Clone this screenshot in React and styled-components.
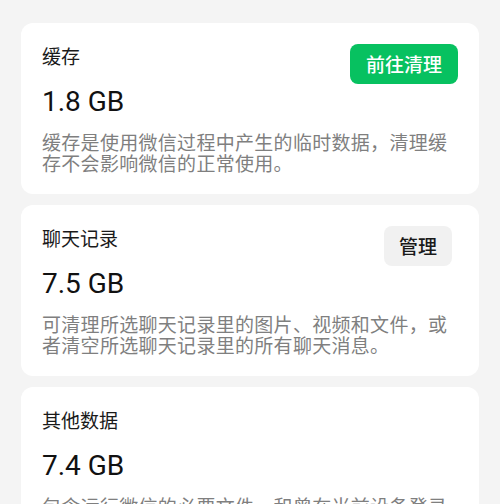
import styled, { createGlobalStyle } from "styled-components";

const GlobalStyle = createGlobalStyle`
  html, body {
    margin: 0;
    padding: 0;
    background: #f4f4f4;
  }
  body {
    font-family: "Noto Sans CJK SC", "Noto Sans", sans-serif;
    -webkit-font-smoothing: antialiased;
  }
`;

const storage = [
  {
    title: "缓存",
    size: "1.8 GB",
    desc: "缓存是使用微信过程中产生的临时数据，清理缓存不会影响微信的正常使用。",
    action: { label: "前往清理", primary: true },
  },
  {
    title: "聊天记录",
    size: "7.5 GB",
    desc: "可清理所选聊天记录里的图片、视频和文件，或者清空所选聊天记录里的所有聊天消息。",
    action: { label: "管理", primary: false },
  },
  {
    title: "其他数据",
    size: "7.4 GB",
    desc: "包含运行微信的必要文件，和曾在当前设备登录过的账号数据。",
  },
];

const App = () => {
  return (
    <>
      <GlobalStyle />
      <Page>
        {storage.map((item) => (
          <Card key={item.title}>
            <Header>
              <Title>{item.title}</Title>
              {item.action && (
                <ActionButton $primary={item.action.primary}>
                  {item.action.label}
                </ActionButton>
              )}
            </Header>
            <Size>{item.size}</Size>
            <Desc>{item.desc}</Desc>
          </Card>
        ))}
      </Page>
    </>
  );
};

const Page = styled.div`
  height: 504px;
  overflow: hidden;
  box-sizing: border-box;
  padding: 23px 21px 0;
  display: flex;
  flex-direction: column;
  gap: 11px;
`;

const Card = styled.div`
  background: #ffffff;
  border-radius: 12px;
  padding: 21px 21px 21px;
  display: flex;
  flex-direction: column;
  flex-shrink: 0;
`;

const Header = styled.div`
  display: flex;
  justify-content: space-between;
  align-items: flex-start;
  min-height: 41px;
`;

const Title = styled.div`
  font-size: 19px;
  line-height: 24px;
  color: #1a1a1a;
`;

const ActionButton = styled.button`
  font-family: "Noto Sans CJK SC", sans-serif;
  font-size: 19px;
  font-weight: 500;
  line-height: 24px;
  border: none;
  border-radius: 8px;
  cursor: pointer;
  height: 40px;
  padding: 0 ${(p) => (p.$primary ? "16px" : "15px")};
  margin-right: ${(p) => (p.$primary ? "0" : "6px")};
  background: ${(p) => (p.$primary ? "#07c160" : "#f1f1f1")};
  color: ${(p) => (p.$primary ? "#ffffff" : "#191919")};
`;

const Size = styled.div`
  font-family: Roboto, "Liberation Sans", sans-serif;
  font-size: 28px;
  font-weight: 400;
  line-height: 34px;
  color: #111111;
`;

const Desc = styled.p`
  margin: 12px 0 0;
  font-size: 19px;
  line-height: 21px;
  letter-spacing: 0.3px;
  color: #7f7f7f;
`;

export default App;
